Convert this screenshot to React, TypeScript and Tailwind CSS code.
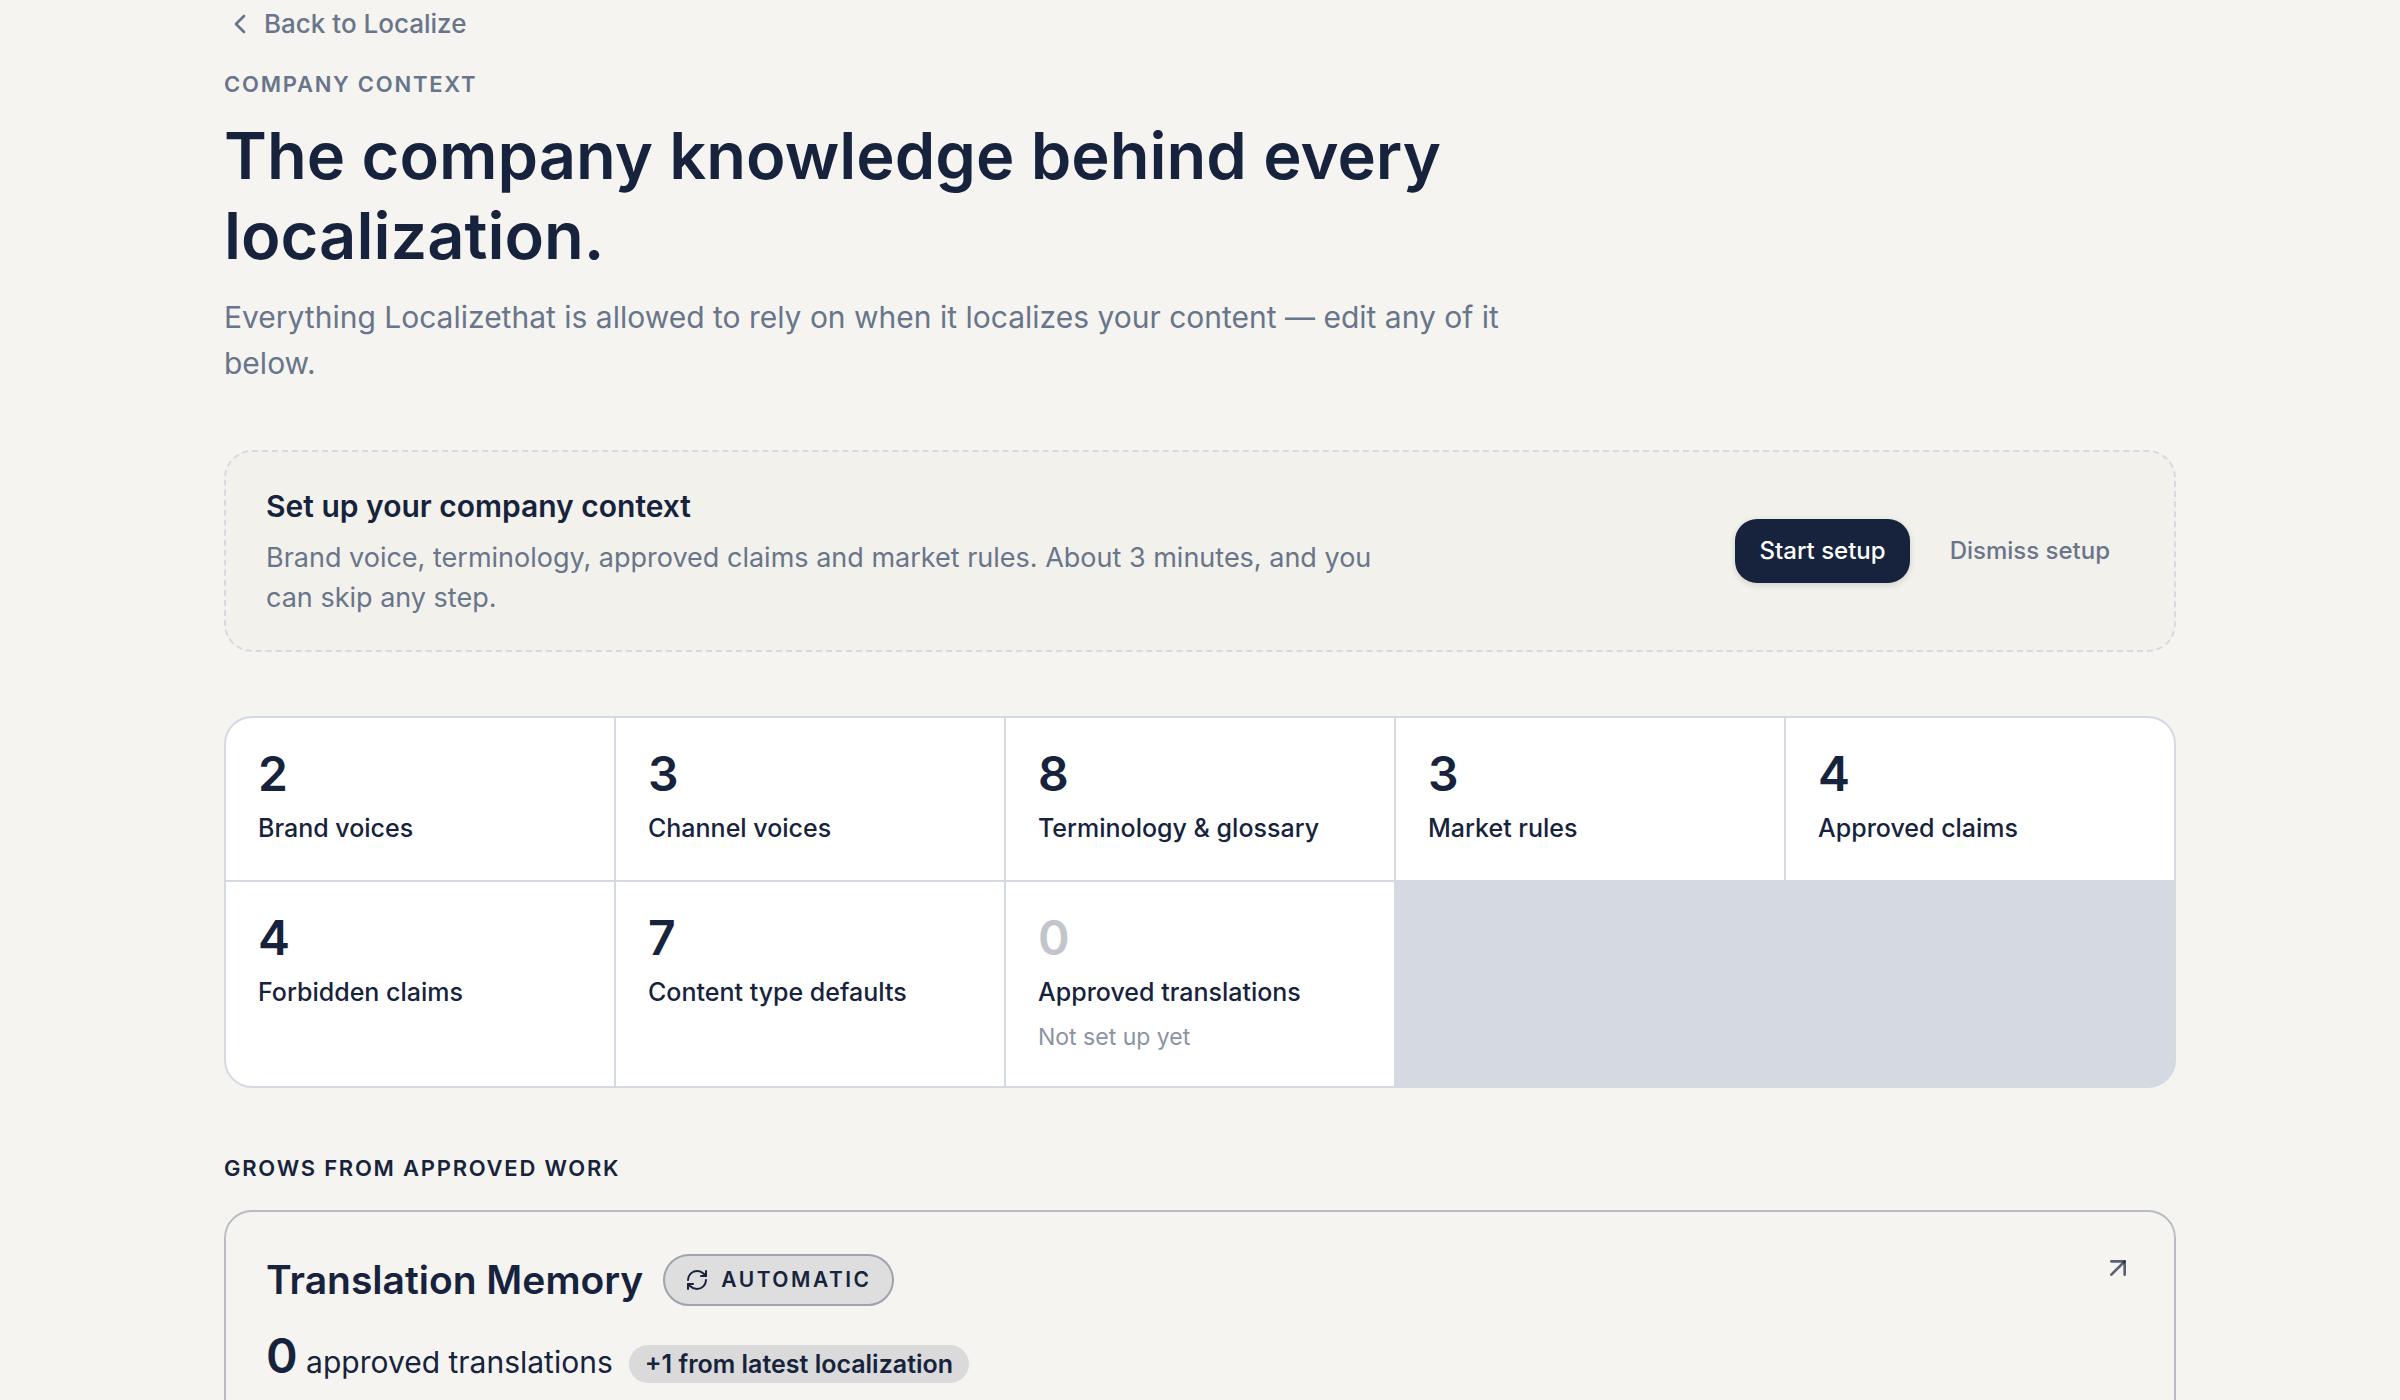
/**
 * Company context page: setup banner, knowledge counters and
 * the Translation Memory card.
 */
import { ArrowUpRight, ChevronLeft, RefreshCw } from "lucide-react";

interface Stat {
  count: number;
  label: string;
}

const STATS: Stat[] = [
  { count: 2, label: "Brand voices" },
  { count: 3, label: "Channel voices" },
  { count: 8, label: "Terminology & glossary" },
  { count: 3, label: "Market rules" },
  { count: 4, label: "Approved claims" },
  { count: 4, label: "Forbidden claims" },
  { count: 7, label: "Content type defaults" },
  { count: 0, label: "Approved translations" },
];

function PageHeader() {
  return (
    <header className="flex flex-col items-start pt-1">
      <a
        href="#localize"
        className="flex items-center gap-2 text-[26px] leading-10 font-medium text-[#68758a]"
      >
        <ChevronLeft className="size-8" aria-hidden="true" />
        Back to Localize
      </a>
      <p className="mt-6 text-[22px] leading-8 font-semibold tracking-[0.08em] text-[#68758a] uppercase">
        Company context
      </p>
      <h1 className="mt-4 max-w-[1344px] text-[65px] leading-[80px] font-semibold">
        The company knowledge behind every localization.
      </h1>
      <p className="mt-[18px] max-w-[1344px] text-[30px] leading-[46px] text-[#68758a]">
        Everything Localizethat is allowed to rely on when it localizes your content — edit any of it below.
      </p>
    </header>
  );
}

function SetupBanner() {
  return (
    <section
      aria-labelledby="setup-title"
      className="mt-16 flex items-center justify-between gap-8 rounded-[28px] border-2 border-dashed border-[#d5d9e1] bg-[#f2f1eb] px-10 py-8"
    >
      <div className="max-w-[1152px]">
        <h2 id="setup-title" className="text-[30px] leading-[44px] font-semibold">
          Set up your company context
        </h2>
        <p className="mt-[10px] text-[27px] leading-10 text-[#68758a]">
          Brand voice, terminology, approved claims and market rules. About 3 minutes, and you can skip any step.
        </p>
      </div>
      <div className="flex shrink-0 items-center gap-4">
        <button
          type="button"
          className="h-16 rounded-[22px] bg-[#17233d] px-6 text-2xl font-medium text-white shadow-[0_2px_6px_rgb(23_35_61/0.15)]"
        >
          Start setup
        </button>
        <button type="button" className="h-16 rounded-[22px] px-6 text-2xl font-medium text-[#68758a]">
          Dismiss setup
        </button>
      </div>
    </section>
  );
}

function StatCell({ count, label }: Stat) {
  const isEmpty = count === 0;

  return (
    <li className="bg-white p-8">
      <p
        className={
          isEmpty
            ? "text-5xl leading-12 font-semibold text-[#c2c6cc]"
            : "text-5xl leading-12 font-semibold"
        }
      >
        {count}
      </p>
      <p className="mt-[10px] text-[25px] leading-10 font-medium">{label}</p>
      {isEmpty && <p className="mt-2 text-[23px] leading-[34px] text-[#8b93a3]">Not set up yet</p>}
    </li>
  );
}

function TranslationMemory() {
  return (
    <section className="mt-16">
      <h2 className="text-[22px] leading-8 font-semibold tracking-[0.08em] uppercase">
        Grows from approved work
      </h2>
      <article className="mt-[26px] rounded-[28px] border-2 border-[#b9bdc3] px-10 pt-10 pb-12">
        <div className="flex items-start justify-between">
          <div className="flex items-center gap-5 pt-0.5">
            <h3 className="text-[39px] leading-[52px] font-semibold">Translation Memory</h3>
            <span className="flex h-[52px] items-center gap-3 rounded-full border-2 border-[#9fa3ad] bg-[#dedede] px-5 text-[21px] font-semibold tracking-[0.12em] uppercase">
              <RefreshCw className="size-6" aria-hidden="true" />
              Automatic
            </span>
          </div>
          <a href="#translation-memory" aria-label="Open Translation Memory" className="text-[#17233d]/70">
            <ArrowUpRight className="size-8" aria-hidden="true" />
          </a>
        </div>
        <div className="mt-[26px] flex items-baseline gap-4">
          <p className="text-[30px] leading-[52px]">
            <span className="text-5xl font-semibold">0</span> approved translations
          </p>
          <span className="rounded-full bg-[#dadada] px-4 text-[25px] leading-[38px] font-semibold">
            +1 from latest localization
          </span>
        </div>
      </article>
    </section>
  );
}

export default function App() {
  return (
    <div className="h-screen overflow-hidden bg-[#f5f4f0] font-['Inter',sans-serif] text-[#17233d]">
      <main className="mx-auto w-full max-w-[2048px] px-12">
        <PageHeader />
        <SetupBanner />
        <ul className="mt-16 grid grid-cols-5 gap-0.5 overflow-hidden rounded-[28px] border-2 border-[#d5d9e1] bg-[#d5d9e1]">
          {STATS.map((s) => (
            <StatCell key={s.label} {...s} />
          ))}
        </ul>
        <TranslationMemory />
      </main>
    </div>
  );
}
